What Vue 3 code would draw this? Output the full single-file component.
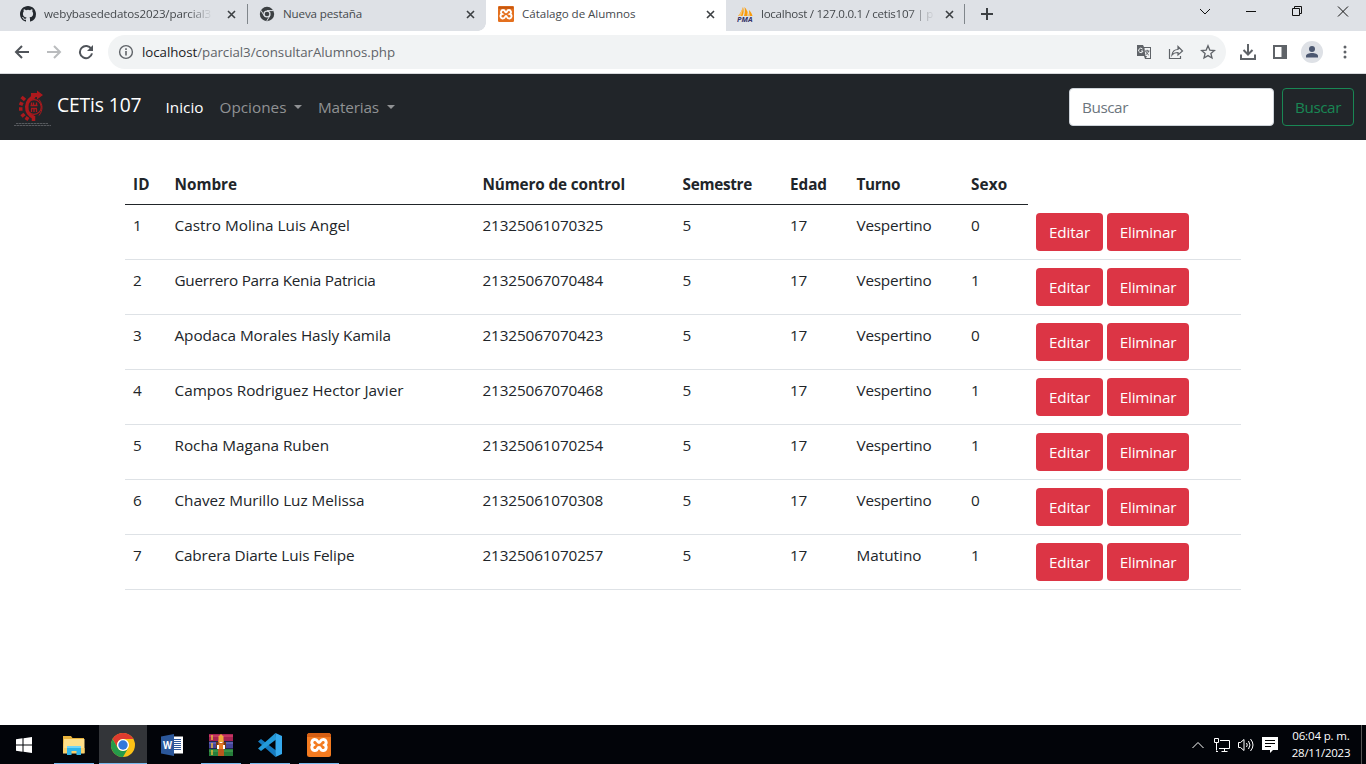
<script setup>
// Sets the tracking of a label so that it fills the given width in pixels.
const vFit = {
  mounted(el, { value }) {
    const natural = el.getBoundingClientRect().width
    el.style.letterSpacing = (value - natural) / el.textContent.length + 'px'
  }
}

const columns = [
  ['ID', 17], ['Nombre', 62.5], ['Número de control', 142.5], ['Semestre', 69.5],
  ['Edad', 37], ['Turno', 43.5], ['Sexo', 36.5]
]

const students = [
  { name: 'Castro Molina Luis Angel', w: 175.5, control: '21325061070325', shift: 'Vespertino', sex: 0 },
  { name: 'Guerrero Parra Kenia Patricia', w: 201, control: '21325067070484', shift: 'Vespertino', sex: 1 },
  { name: 'Apodaca Morales Hasly Kamila', w: 216.5, control: '21325067070423', shift: 'Vespertino', sex: 0 },
  { name: 'Campos Rodriguez Hector Javier', w: 229, control: '21325067070468', shift: 'Vespertino', sex: 1 },
  { name: 'Rocha Magana Ruben', w: 154.5, control: '21325061070254', shift: 'Vespertino', sex: 1 },
  { name: 'Chavez Murillo Luz Melissa', w: 190, control: '21325061070308', shift: 'Vespertino', sex: 0 },
  { name: 'Cabrera Diarte Luis Felipe', w: 180, control: '21325061070257', shift: 'Matutino', sex: 1 }
]
</script>

<template>
  <div class="screen">
    <header class="tabs">
      <div class="tab t1">
        <svg width="16" height="16" viewBox="0 0 16 16"><path fill="#24292f" d="M8 0C3.58 0 0 3.58 0 8c0 3.54 2.29 6.53 5.47 7.59.4.07.55-.17.55-.38 0-.19-.01-.82-.01-1.49-2.01.37-2.53-.49-2.69-.94-.09-.23-.48-.94-.82-1.13-.28-.15-.68-.52-.01-.53.63-.01 1.08.58 1.23.82.72 1.21 1.87.87 2.33.66.07-.52.28-.87.51-1.07-1.78-.2-3.64-.89-3.64-3.95 0-.87.31-1.59.82-2.15-.08-.2-.36-1.02.08-2.12 0 0 .67-.21 2.2.82a7.6 7.6 0 0 1 4 0c1.53-1.04 2.2-.82 2.2-.82.44 1.1.16 1.92.08 2.12.51.56.82 1.27.82 2.15 0 3.07-1.87 3.75-3.65 3.95.29.25.54.73.54 1.48 0 1.07-.01 1.93-.01 2.2 0 .21.15.46.55.38A8 8 0 0 0 16 8c0-4.42-3.58-8-8-8z"/></svg>
        <span class="label"><span v-fit="167" class="fade">webybasededatos2023/parcial3</span></span>
        <svg class="x" width="9" height="9" viewBox="0 0 9 9"><path d="M1 1l7 7M8 1L1 8"/></svg>
      </div>
      <div class="tab t2">
        <svg width="16" height="16" viewBox="0 0 16 16"><circle cx="8" cy="8" r="7.2" fill="#3c4043"/><path d="M8 4.600h6.300M5.100 9.700L2 4.400M10.900 9.700l-3.200 5.400" stroke="#dee1e6" stroke-width="1"/><circle cx="8" cy="8" r="3.600" fill="#dee1e6"/><circle cx="8" cy="8" r="2.300" fill="#3c4043"/></svg>
        <span class="label"><span v-fit="79">Nueva pestaña</span></span>
        <svg class="x" width="9" height="9" viewBox="0 0 9 9"><path d="M1 1l7 7M8 1L1 8"/></svg>
      </div>
      <div class="tab t3">
        <svg width="16" height="16" viewBox="0 0 24 24"><rect width="24" height="24" rx="2" fill="#e4701e"/><path fill="#c45710" d="M1 1h22v3H1z"/><path fill="none" stroke="#fff" stroke-width="2.800" d="M12 9.500C10 9.500 11 6 8 6A3.200 3.200 0 0 0 6.200 12 3.200 3.200 0 0 0 8 18.500C11 18.500 10 15 12 15s1 3.500 4 3.500A3.200 3.200 0 0 0 17.800 12 3.200 3.200 0 0 0 16 6C13 6 14 9.500 12 9.500z"/></svg>
        <span class="label"><span v-fit="113.5">Cátalago de Alumnos</span></span>
        <svg class="x" width="9" height="9" viewBox="0 0 9 9"><path d="M1 1l7 7M8 1L1 8"/></svg>
      </div>
      <div class="tab t4">
        <svg width="16" height="16" viewBox="0 0 16 16"><path fill="#f89c0e" d="M1 10C3 8 5 4 6 1c1 3 1 6-.5 9zM7 10c1-3 1-6 .5-9 2 2 4 6 4 9zM12 4c2 2 3 4 3.500 6h-3z"/><path fill="#fbc36b" d="M1 10C3 8 5 4 6 1c0 3-1 6-2 9zM10 5l2 5h-2z"/><text x="0" y="15.500" font-size="6.500" textLength="15.500" lengthAdjust="spacingAndGlyphs" font-weight="bold" font-style="italic" fill="#34346a">PMA</text></svg>
        <span class="label"><span v-fit="172" class="fade">localhost / 127.0.0.1 / cetis107 | p</span></span>
        <svg class="x" width="9" height="9" viewBox="0 0 9 9"><path d="M1 1l7 7M8 1L1 8"/></svg>
      </div>
      <svg class="plus" width="12" height="12" viewBox="0 0 12 12"><path d="M6 0v12M0 6h12" stroke="#3c4043" stroke-width="2"/></svg>
      <div class="window">
        <svg width="12" height="10" viewBox="0 0 12 10"><path d="M1 3l5 5 5-5"/></svg>
        <svg width="12" height="10" viewBox="0 0 12 10"><path d="M1 5.500h10"/></svg>
        <svg width="12" height="11" viewBox="0 0 12 11"><path d="M1.500 2.500h7v7h-7zM3.500 2.500v-2h7v7h-2"/></svg>
        <svg width="12" height="11" viewBox="0 0 12 11"><path d="M1 .500l10 10M11 .500l-10 10"/></svg>
      </div>
    </header>

    <div class="toolbar">
      <svg class="back" width="16" height="16" viewBox="0 0 16 16"><path d="M15 8H2M8 2L2 8l6 6"/></svg>
      <svg class="next" width="16" height="16" viewBox="0 0 16 16"><path d="M1 8h13M8 2l6 6-6 6"/></svg>
      <svg class="reload" width="16" height="16" viewBox="0 0 16 16"><path d="M13.300 5A6.100 6.100 0 1 0 14 9.400"/><path class="solid" d="M15 1v6H9z"/></svg>
      <div class="omni">
        <svg width="16" height="16" viewBox="0 0 16 16"><circle cx="8" cy="8" r="6.400" fill="none" stroke="#5f6368" stroke-width="1.400"/><path d="M8 7v4.500M8 4.300v1.600" stroke="#5f6368" stroke-width="1.600"/></svg>
        <span v-fit="253" class="url"><b>localhost</b>/parcial3/consultarAlumnos.php</span>
        <svg class="tr" width="16" height="16" viewBox="0 0 16 16"><path fill="#5f6368" d="M1 1h6l1 2h7v12H9l-1-3H1z"/><path fill="#f1f3f4" d="M8.500 4H14v10H10l1-2H9.300z"/><path d="M6.500 5A2.200 2.200 0 1 0 7 7H5" fill="none" stroke="#f1f3f4"/><path d="M9 7h4.500M11.200 5.800V7M12.500 7c-.4 2-1.400 3-3 4M9.800 7.500c1 2 2 3 3 3.500" fill="none" stroke="#5f6368"/></svg>
        <svg class="share" width="16" height="16" viewBox="0 0 16 16"><path d="M1.500 5v9.500h11V12M4 11c.5-4 2.500-5.500 6-5.500v-3L14.500 7 10 11V8.500C7.500 8.500 5.500 9 4 11z" fill="none" stroke="#5f6368" stroke-width="1.200"/></svg>
        <svg width="16" height="16" viewBox="0 0 16 16"><path d="M8 1.800l1.800 4.300 4.600.4-3.500 3 1.100 4.500L8 11.600 4 14l1.100-4.500-3.500-3 4.600-.4z" fill="none" stroke="#5f6368" stroke-width="1.300"/></svg>
      </div>
      <svg class="dl" width="16" height="16" viewBox="0 0 16 16"><path d="M8 0v10M3.500 6L8 10.500 12.500 6M1 10.500V15h14v-4.500" fill="none" stroke="#5f6368" stroke-width="2"/></svg>
      <svg class="side" width="14" height="14" viewBox="0 0 14 14"><path fill="#5f6368" fill-rule="evenodd" d="M0 0h14v14H0zM2 2v10h6.500V2z"/></svg>
      <svg class="avatar" width="22" height="22" viewBox="0 0 22 22"><circle cx="11" cy="11" r="11" fill="#dee1e6"/><circle cx="11" cy="8" r="3" fill="#4b5770"/><path d="M5 16.500v-1.500c0-2 3-3 6-3s6 1 6 3v1.500z" fill="#4b5770"/></svg>
      <svg class="dots" width="4" height="14" viewBox="0 0 4 14"><g fill="#5f6368"><circle cx="2" cy="2" r="1.500"/><circle cx="2" cy="7" r="1.500"/><circle cx="2" cy="12" r="1.500"/></g></svg>
    </div>

    <nav class="navbar">
      <svg class="logo" width="40" height="40" viewBox="0 0 40 40">
        <path d="M22 7.500a11 11 0 0 0-1 21" fill="none" stroke="#ab191d" stroke-width="3.500"/>
        <path d="M12 11L8.500 8M10 15.500l-3.500-1.500M9.500 20H6M11.500 25l-3 2.500M15 28l-2 3M20.500 27v5" stroke="#ab191d" stroke-width="3.500"/>
        <path fill="#ab191d" d="M18 4h6V1.500L30 6l-6 4.500V8h-6z"/>
        <g fill="none" stroke="#ab191d"><circle cx="21" cy="18" r="7.300" stroke-width="1.200"/><path d="M26 10.500c4 5 4 11 0 16" stroke-width="1"/><path d="M18.500 13.500v3.500M20.500 13.500v3.500M23.500 13.500v3.500M17.500 16.500h7M18 19.500h6M18.500 20v3M21 20v3M23.500 20v3" stroke-width="1.300"/></g>
        <path d="M3 34.500h32M1 36.500h37" stroke="#56595d" stroke-width="1" stroke-dasharray="2.500 .5"/>
      </svg>
      <span v-fit="84.500" class="brand">CETis 107</span>
      <span v-fit="38" class="link on">Inicio</span>
      <span class="link drop"><span v-fit="67">Opciones</span><i></i></span>
      <span class="link drop"><span v-fit="61">Materias</span><i></i></span>
      <div class="search"><span v-fit="46">Buscar</span></div>
      <button class="find"><span v-fit="46">Buscar</span></button>
    </nav>

    <main>
      <table>
        <colgroup><col class="c1"><col class="c2"><col class="c3"><col class="c4"><col class="c5"><col class="c6"><col class="c7"><col></colgroup>
        <thead>
          <tr><th v-for="[label, w] in columns" :key="label"><span v-fit="w">{{ label }}</span></th></tr>
        </thead>
        <tbody>
          <tr v-for="(s, i) in students" :key="s.name">
            <td>{{ i + 1 }}</td>
            <td><span v-fit="s.w">{{ s.name }}</span></td>
            <td><span v-fit="120.500">{{ s.control }}</span></td>
            <td>5</td>
            <td><span v-fit="17">17</span></td>
            <td><span v-fit="s.shift === 'Matutino' ? 65 : 75">{{ s.shift }}</span></td>
            <td>{{ s.sex }}</td>
            <td class="actions"><button class="edit"><span v-fit="41">Editar</span></button><button class="del"><span v-fit="56.500">Eliminar</span></button></td>
          </tr>
        </tbody>
      </table>
    </main>

    <footer class="taskbar">
      <div class="app start"><svg width="16" height="16" viewBox="0 0 16 16"><path fill="#fff" d="M0 2.200l6.500-.9v6.200H0zM7.500 1.200L16 0v7.500H7.500zM0 8.500h6.500v6.200L0 13.800zM7.500 8.500H16V16l-8.500-1.200z"/></svg></div>
      <div class="app open"><svg width="22" height="20" viewBox="0 0 22 20"><path fill="#e8b33c" d="M0 1h8l1.500 2H21v15H0z"/><path fill="#ffe08a" d="M1 4h20.500v14.500H0z"/><path fill="#f8d06a" d="M0 13h21.500v5H0z"/><path fill="#2fb5ea" d="M4 11h14v9h-4.500v-4h-5v4H4z"/><path fill="#72d5f8" d="M4 11h14v2H4z"/></svg></div>
      <div class="app open active"><svg width="24" height="24" viewBox="0 0 24 24"><circle cx="12" cy="12" r="12" fill="#fbc116"/><path fill="#de3b2f" d="M1.600 6A12 12 0 0 1 22.400 6H12a6 6 0 0 0-5.200 9z"/><path fill="#269b4a" d="M1.600 6A12 12 0 0 0 12 24l5.200-9a6 6 0 0 1-10.400 0z"/><circle cx="12" cy="12" r="6" fill="#fff"/><circle cx="12" cy="12" r="4.700" fill="#3378dc"/></svg></div>
      <div class="app"><svg width="22" height="22" viewBox="0 0 22 22"><path fill="#fff" d="M11 2.500h11v17H11z"/><path d="M13 5.500h7M13 7.500h7M13 9.500h7M13 11.500h7M13 13.500h7M13 15.500h7" stroke="#2b579a" stroke-width="1"/><path fill="#2b579a" d="M0 2.500L13 0v22L0 19.500z"/><text x="2" y="14.500" font-size="10" font-weight="bold" fill="#fff" textLength="9" lengthAdjust="spacingAndGlyphs">W</text></svg></div>
      <div class="app open"><svg width="24" height="22" viewBox="0 0 24 22"><rect y="0" width="24" height="7" fill="#a52352"/><rect y="7.500" width="24" height="7" fill="#45459a"/><rect y="15" width="24" height="7" fill="#267d3a"/><path d="M0 2h24" stroke="#e04c70"/><path d="M0 9h24" stroke="#7278c7"/><path d="M0 17h24" stroke="#4cab55"/><path d="M3 1v5M3 9v5M3 16v5" stroke="#e7b73c" stroke-width="1.500"/><path fill="#b9581f" d="M9 6h6v16H9z"/><path fill="#f0a83a" d="M9.500 2.500L12 0l2.500 2.500V8h-5z"/><path fill="#713a18" d="M7 8h2v6H7zM15 8h2v6h-2z"/><path fill="#fff" d="M8 11h2v4H8zM14 11h2v4h-2zM10.500 8h3v1h-3z"/><path fill="#e87b24" d="M10 9.500h4V15h-4z"/></svg></div>
      <div class="app open"><svg width="24" height="24" viewBox="0 0 24 24"><path fill="#157abf" d="M0 8.500L3 6l15 11.500L17.500 24z"/><path fill="#239ad9" d="M17.500 0L18 6.500 3 18l-3-2.500z"/><path fill="#35a9ed" d="M17.500 0L24 3v18l-6.500 3z"/></svg></div>
      <div class="app open"><svg width="24" height="24" viewBox="0 0 24 24"><rect width="24" height="24" rx="2.500" fill="#f47b20"/><path fill="#d65f13" d="M2 0h20l2 2v2H0V2z"/><path fill="none" stroke="#fff" stroke-width="2.900" d="M12 9.500C10 9.500 11 6.500 8 6.500A3 3 0 0 0 6.200 12 3 3 0 0 0 8 17.500C11 17.500 10 14.500 12 14.500s1 3 4 3A3 3 0 0 0 17.800 12 3 3 0 0 0 16 6.500C13 6.500 14 9.500 12 9.500z"/></svg></div>
      <div class="tray">
        <svg width="12" height="8" viewBox="0 0 12 8"><path d="M.5 7L6 1.500 11.500 7"/></svg>
        <svg width="16" height="14" viewBox="0 0 16 14"><path d="M6 2.500h9.500v8H5M.5.5h4v4h-4zM2.500 4.500v8M2 13.500h2M10.500 10.500v3M7.500 13.500h6"/></svg>
        <svg width="16" height="14" viewBox="0 0 16 14"><path d="M.5 4.500h2L6 1.500v11L2.500 9.500h-2zM8.500 5q1.500 2 0 4M10.500 3q3 4 0 8M12.500 1q5 6 0 12"/></svg>
        <svg width="16" height="16" viewBox="0 0 16 16"><path fill="#fff" stroke="none" d="M0 0h16v13h-5l-3 3v-3H0z"/><path stroke="#000" d="M3 3.500h10M3 6.500h10M3 9.500h6"/></svg>
        <div class="clock"><span v-fit="57.500">06:04 p. m.</span><span v-fit="58.500">28/11/2023</span></div>
        <i class="edge"></i>
      </div>
    </footer>
  </div>
</template>

<style>
html, body { margin: 0; overflow: hidden; background: #fff; }
</style>

<style scoped>
* { box-sizing: border-box; }
.screen { width: 1366px; height: 764px; display: flex; flex-direction: column; font-family: "Open Sans", "Noto Sans", sans-serif; font-size: 15.3px; line-height: 24px; color: #212529; }
.screen span { white-space: nowrap; }
svg { display: block; flex: none; }
button { font: inherit; padding: 0; margin: 0; }
i { display: block; }

.tabs { height: 31px; flex: none; background: #dee1e6; display: flex; }
.tab { display: flex; align-items: center; height: 31px; padding: 0 11px 3px; gap: 8px; font-size: 11.6px; line-height: 16px; color: #45494d; }
.t1 { width: 248px; padding-left: 20px; background: linear-gradient(#80868b, #80868b) 247px 4px / 1px 20px no-repeat; }
.t2 { width: 238px; }
.t3 { width: 240px; background: #fff; padding-left: 12px; }
.t4 { width: 239px; background: #dee1e6 linear-gradient(#80868b, #80868b) 238px 4px / 1px 20px no-repeat; }
.t2 { background: radial-gradient(circle at 0 0, transparent 7.5px, #fff 8px) 230px 23px / 8px 8px no-repeat; }
.label { flex: 1; min-width: 0; overflow: hidden; }
.label span { display: inline-block; vertical-align: top; }
.fade { -webkit-mask-image: linear-gradient(90deg, #000 86%, transparent 101%); mask-image: linear-gradient(90deg, #000 86%, transparent 101%); }
.x path { fill: none; stroke: #3c4043; stroke-width: 1.6; }
.t1 .x { margin-right: 1px; }
.plus { margin: 8px 0 0 16px; }
.window { margin: 6px 17px 0 auto; display: flex; gap: 34px; }
.window path { fill: none; stroke: #111; stroke-width: 1; }

.toolbar { height: 43px; flex: none; background: #fff; border-bottom: 1px solid #d7d9dc; display: flex; align-items: center; padding-left: 14px; }
.back, .next, .reload { fill: none; stroke: #50545a; stroke-width: 2; margin-right: 16px; }
.next { stroke: #babcbe; }
.reload { margin-right: 14px; }
.solid { fill: #50545a; stroke: none; }
.omni { width: 1118px; height: 34px; border-radius: 17px; background: #f1f3f4; display: flex; align-items: center; padding: 0 10px; }
.url { font-size: 13.3px; line-height: 18px; color: #5f6368; margin-left: 8px; }
.url b { font-weight: 400; color: #202124; }
.tr { margin-left: auto; }
.share { margin: 0 16px; }
.dl { margin-left: 14px; }
.side { margin-left: 17px; }
.avatar { margin-left: 14px; }
.dots { margin-left: 20px; }

.navbar { height: 66px; flex: none; background: #212529; display: flex; align-items: center; padding: 0 12px; }
.logo { margin: 3px 4px 0 1px; }
.brand { font-size: 19.3px; color: #fff; line-height: 30px; margin-right: 24px; margin-top: -4px; }
.link { color: #909294; margin-right: 16px; }
.link.on { color: #fff; }
.drop { display: flex; align-items: center; }
.drop i { width: 0; border: 4.5px solid transparent; border-top-color: #909294; border-bottom: 0; margin-left: 7.5px; }
.search { margin-left: auto; width: 205px; height: 38px; border: 1px solid #ced4da; border-radius: 4px; background: #fff; padding: 6px 12px; color: #6c757d; margin-right: 8px; }
.find { width: 72px; height: 38px; border: 1px solid #198754; border-radius: 4px; background: none; color: #198754; }

main { flex: 1; background: #fff; padding: 24px 0 0 125px; }
table { width: 1116px; table-layout: fixed; border-collapse: separate; border-spacing: 0; }
.c1 { width: 41.5px; } .c2 { width: 308px; } .c3 { width: 200px; } .c4 { width: 107.5px; } .c5 { width: 66.5px; } .c6 { width: 114.5px; } .c7 { width: 65px; }
th { height: 41px; padding: 8px; text-align: left; font-weight: 700; border-bottom: 1px solid #212529; line-height: 24px; }
td { height: 55px; padding: 8px; vertical-align: top; border-bottom: 1px solid #dee2e6; }
th span, td span { display: inline-block; vertical-align: top; }
.actions { font-size: 0; }
.actions button { height: 38px; border: 0; border-radius: 4px; background: #dc3545; color: #fff; font-size: 15.3px; line-height: 24px; vertical-align: top; }
.edit { width: 67px; margin-right: 4px; }
.del { width: 82px; }

.taskbar { height: 39px; flex: none; background: #020409; display: flex; }
.app { width: 40px; margin: 0 5px 0 4px; height: 39px; display: flex; align-items: center; justify-content: center; }
.app.start { margin-right: 6px; }
.app svg { margin-top: 1px; }
.open { border-bottom: 1px solid #76b9ed; }
.app.open svg { margin-top: 2px; }
.active { width: 48px; margin: 0 1px 0 0; background: #333539; }
.tray { margin-left: auto; display: flex; align-items: center; height: 39px; gap: 8px; }
.tray path { fill: none; stroke: #fff; stroke-width: 1; }
.tray path[stroke="none"] { fill: #fff; stroke: none; }
.tray path[stroke="#000"] { stroke: #000; }
.tray svg:first-child { margin-right: 2px; }
.clock { width: 60px; margin-left: 5px; display: flex; flex-direction: column; align-items: center; font-size: 11.5px; line-height: 17px; color: #fff; margin-top: -1px; }
.edge { width: 1px; height: 39px; background: #555; margin: 0 4px 0 2px; }
</style>
